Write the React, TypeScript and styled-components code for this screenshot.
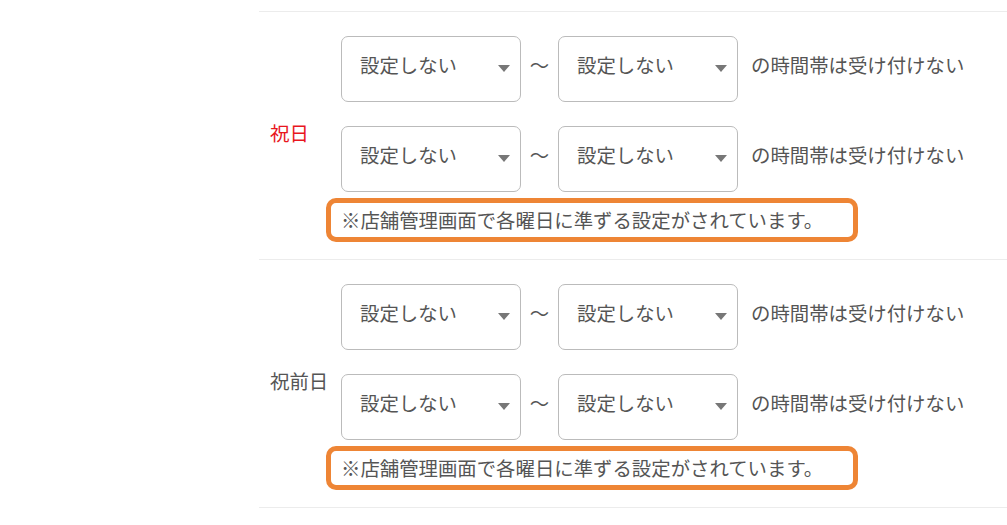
import React from "react";
import styled, { createGlobalStyle } from "styled-components";

const GlobalStyle = createGlobalStyle`
  body {
    margin: 0;
    background: #fff;
    font-family: "Noto Sans CJK JP", "Noto Sans", sans-serif;
    color: #555;
  }
`;

const Page = styled.div`
  padding-top: 11px;
  padding-left: 259px;
`;

const Section = styled.div`
  display: flex;
  align-items: center;
  border-top: 1px solid #ececec;
  padding: 24px 0 17px;
`;

const Label = styled.div<{ $red?: boolean }>`
  flex: 0 0 67px;
  min-width: 0;
  padding: 0 0 13px 11px;
  box-sizing: border-box;
  font-size: 19.4px;
  line-height: 1;
  white-space: nowrap;
  color: ${(p) => (p.$red ? "#e8161e" : "#555")};
`;

const Body = styled.div`
  display: flex;
  flex-direction: column;
`;

const Rows = styled.div`
  display: flex;
  flex-direction: column;
  gap: 24px;
  padding-left: 15px;
`;

const Row = styled.div`
  display: flex;
  align-items: center;
`;

const Select = styled.div`
  width: 180px;
  height: 66px;
  box-sizing: border-box;
  border: 1px solid #bbb;
  border-radius: 7px;
  display: flex;
  align-items: center;
  justify-content: space-between;
  padding: 0 10px 9px 18px;
  font-size: 19.4px;
  color: #555;
`;

const Arrow = styled.span`
  width: 0;
  height: 0;
  border-left: 6.5px solid transparent;
  border-right: 6.5px solid transparent;
  border-top: 7px solid #777;
  margin-top: 7px;
`;

const Tilde = styled.span`
  width: 37px;
  text-align: center;
  font-size: 19.4px;
  padding-bottom: 9px;
`;

const Suffix = styled.span`
  margin-left: 13px;
  padding-bottom: 9px;
  font-size: 19.4px;
  white-space: nowrap;
`;

const Note = styled.div`
  margin-top: 6px;
  align-self: flex-start;
  width: 532px;
  height: 44px;
  box-sizing: border-box;
  border: 5px solid #ee8535;
  border-radius: 10px;
  display: flex;
  align-items: center;
  padding: 0 0 2px 10px;
  font-size: 19.4px;
  color: #555;
  white-space: nowrap;
`;

const TimeSelect: React.FC = () => (
  <Select>
    <span>設定しない</span>
    <Arrow />
  </Select>
);

const TimeRow: React.FC = () => (
  <Row>
    <TimeSelect />
    <Tilde>〜</Tilde>
    <TimeSelect />
    <Suffix>の時間帯は受け付けない</Suffix>
  </Row>
);

type DaySectionProps = { label: string; red?: boolean };

const DaySection: React.FC<DaySectionProps> = ({ label, red }) => (
  <Section>
    <Label $red={red}>{label}</Label>
    <Body>
      <Rows>
        <TimeRow />
        <TimeRow />
      </Rows>
      <Note>※店舗管理画面で各曜日に準ずる設定がされています。</Note>
    </Body>
  </Section>
);

const Bottom = styled.div`
  border-top: 1px solid #ececec;
`;

function App() {
  return (
    <Page>
      <GlobalStyle />
      <DaySection label="祝日" red />
      <DaySection label="祝前日" />
      <Bottom />
    </Page>
  );
}

export default App;
